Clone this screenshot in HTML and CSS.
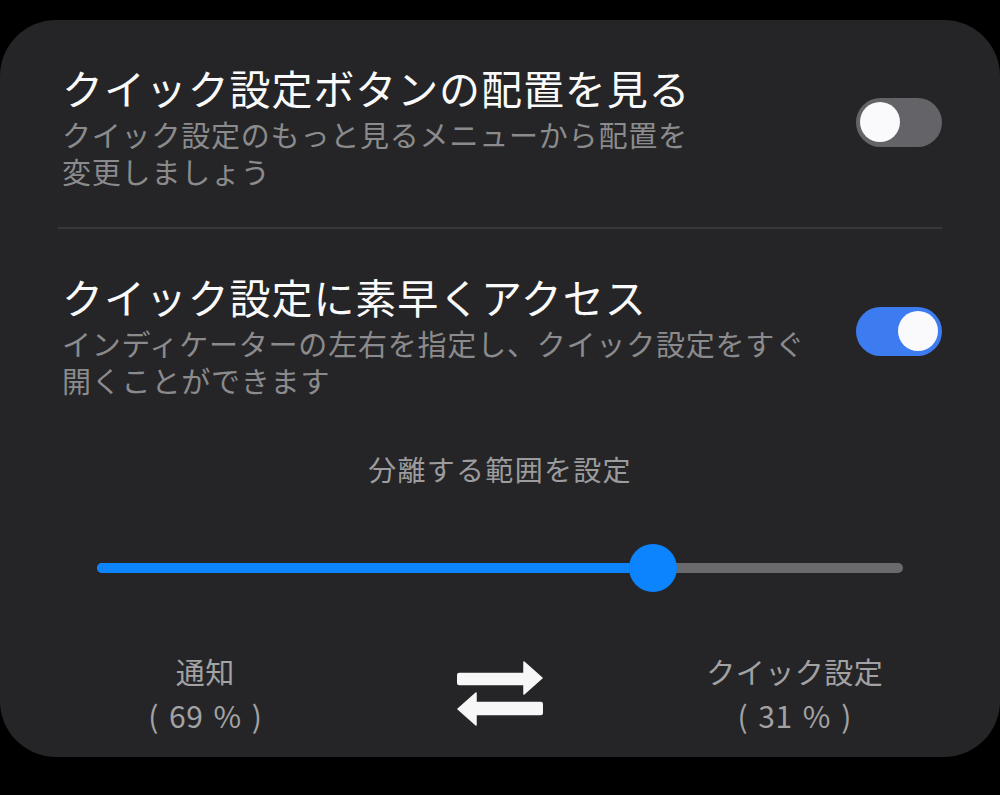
FILE: index.html
```html
<!DOCTYPE html>
<html lang="ja">

<head>
  <meta charset="UTF-8">
  <meta name="viewport" content="width=device-width, initial-scale=1.0">
  <title>クイック設定</title>
  <link rel="stylesheet" href="styles.css">
</head>

<body>
  <div class="card">
    <div class="row">
      <div class="row-text">
        <div class="title">クイック設定ボタンの配置を見る</div>
        <div class="desc desc-short">クイック設定のもっと見るメニューから配置を変更しましょう</div>
      </div>
      <div class="toggle"><span class="knob"></span></div>
    </div>

    <div class="divider"></div>

    <div class="row row-second">
      <div class="row-text">
        <div class="title">クイック設定に素早くアクセス</div>
        <div class="desc desc-long">インディケーターの左右を指定し、クイック設定をすぐ開くことができます</div>
      </div>
      <div class="toggle on"><span class="knob"></span></div>
    </div>

    <div class="slider-label">分離する範囲を設定</div>

    <div class="slider">
      <div class="track">
        <div class="fill" style="width: 69%"></div>
        <div class="thumb" style="left: 69%"></div>
      </div>
    </div>

    <div class="split">
      <div class="side">
        <div>通知</div>
        <div class="pct">( 69 % )</div>
      </div>
      <div class="swap">
        <svg width="86" height="65" viewBox="0 0 86 65">
          <g fill="#f7f7f7" stroke="#f7f7f7" stroke-width="1.5" stroke-linejoin="round">
            <rect x="0.75" y="12.5" width="68" height="11" rx="1.5"/>
            <polygon points="67,1 85,17 67,33"/>
            <rect x="17" y="41.5" width="68.25" height="12" rx="1.5"/>
            <polygon points="19,32 1,48 19,64"/>
          </g>
        </svg>
      </div>
      <div class="side">
        <div>クイック設定</div>
        <div class="pct">( 31 % )</div>
      </div>
    </div>
  </div>
</body>

</html>
```

FILE: styles.css
```css
body {
  margin: 0;
  background: #000;
  font-family: "Noto Sans CJK JP", "Noto Sans", sans-serif;
}

.card {
  margin-top: 20px;
  height: 737px;
  box-sizing: border-box;
  padding: 42px 58px 0;
  background: #252527;
  border-radius: 56px;
}

.row {
  display: flex;
  align-items: center;
  padding-left: 4px;
}

.row-text {
  flex: 1;
}

.title {
  font-size: 41px;
  line-height: 50px;
  color: #fafafa;
  letter-spacing: 0.9px;
}

.desc {
  margin-top: 4px;
  font-size: 29px;
  line-height: 37px;
  color: #8b8b8d;
  letter-spacing: 0.8px;
}

.desc-short {
  max-width: 640px;
}

.desc-long {
  max-width: 760px;
}

.toggle {
  display: flex;
  align-items: center;
  justify-content: flex-start;
  width: 86px;
  height: 49px;
  box-sizing: border-box;
  padding: 0 4px;
  margin-bottom: 8px;
  border-radius: 25px;
  background: #646468;
}

.toggle.on {
  justify-content: flex-end;
  background: #3d7bf1;
}

.knob {
  width: 40px;
  height: 40px;
  border-radius: 50%;
  background: #fafafc;
}

.divider {
  height: 2px;
  margin-top: 37px;
  background: #38383a;
}

.row-second {
  margin-top: 42px;
}

.slider-label {
  margin-top: 50px;
  text-align: center;
  font-size: 28px;
  line-height: 40px;
  color: #9c9c9e;
  letter-spacing: 1.3px;
}

.slider {
  display: flex;
  align-items: center;
  height: 48px;
  margin: 55px 39px 0;
}

.track {
  position: relative;
  flex: 1;
  height: 10px;
  border-radius: 5px;
  background: #6a6a6c;
}

.fill {
  height: 100%;
  border-radius: 5px;
  background: #0b84fd;
}

.thumb {
  position: absolute;
  top: 50%;
  width: 48px;
  height: 48px;
  border-radius: 50%;
  background: #0b84fd;
  transform: translate(-50%, -50%);
}

.split {
  display: grid;
  grid-template-columns: 1fr 1fr 1fr;
  align-items: center;
  margin-top: 57px;
}

.side {
  text-align: center;
  font-size: 29px;
  line-height: 44px;
  color: #a2a2a4;
  letter-spacing: 0.5px;
}

.pct {
  font-size: 30px;
  word-spacing: 3px;
}

.swap {
  display: flex;
  justify-content: center;
}
```
